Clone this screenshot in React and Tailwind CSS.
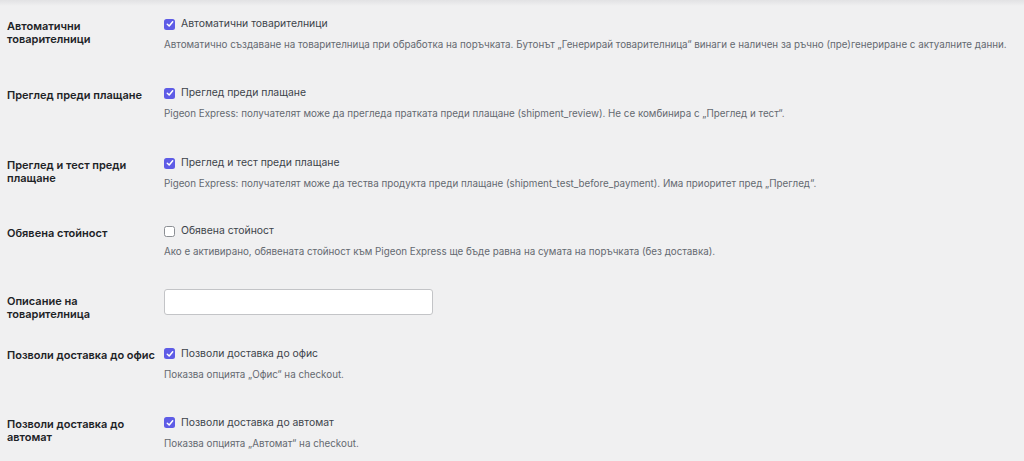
import React from "react";

function Check({ checked }) {
  return checked ? (
    <span className="flex h-[11px] w-[11px] shrink-0 items-center justify-center rounded-[2.5px] bg-[#5e5ce6]">
      <svg width="8" height="8" viewBox="0 0 8 8" fill="none">
        <path d="M1.3 4.2 L3.2 6 L6.7 1.8" stroke="white" strokeWidth="1.5" strokeLinecap="round" strokeLinejoin="round" />
      </svg>
    </span>
  ) : (
    <span className="h-[11px] w-[11px] shrink-0 rounded-[2.5px] border border-[#8c8f94] bg-white" />
  );
}

function Row({ h, label, checked, text, desc, input }) {
  return (
    <div className={`flex ${h}`}>
      <div className="w-[164px] shrink-0 pl-[7px]">
        <div className={`w-[156px] text-[11px] font-semibold leading-[13px] text-[#1d2327] ${input ? "pt-[6px]" : "pt-[3px]"}`}>
          {label}
        </div>
      </div>
      <div className="flex-1">
        {input ? (
          <div className="h-[26px] w-[269px] rounded-[3px] border border-[#c3c4c7] bg-white" />
        ) : (
          <>
            <div className="flex h-[15px] items-center gap-[6px] text-[10.4px] text-[#3c434a]">
              <Check checked={checked} />
              <span>{text}</span>
            </div>
            <div className="mt-[6.5px] text-[9.8px] leading-[14px] text-[#646970]">{desc}</div>
          </>
        )}
      </div>
    </div>
  );
}

export default function App() {
  return (
    <div lang="bg" className="h-[461px] w-[1024px] overflow-hidden bg-[#f0f0f1] font-['Inter',sans-serif]">
      <div className="h-[6px] bg-gradient-to-b from-[#e2e2e4] to-[#f0f0f1]" />
      <div className="flex flex-col pt-[10.5px]">
        <Row
          h="h-[69px]"
          label="Автоматични товарителници"
          checked
          text="Автоматични товарителници"
          desc="Автоматично създаване на товарителница при обработка на поръчката. Бутонът „Генерирай товарителница“ винаги е наличен за ръчно (пре)генериране с актуалните данни."
        />
        <Row
          h="h-[70px]"
          label="Преглед преди плащане"
          checked
          text="Преглед преди плащане"
          desc="Pigeon Express: получателят може да прегледа пратката преди плащане (shipment_review). Не се комбинира с „Преглед и тест“."
        />
        <Row
          h="h-[68px]"
          label="Преглед и тест преди плащане"
          checked
          text="Преглед и тест преди плащане"
          desc="Pigeon Express: получателят може да тества продукта преди плащане (shipment_test_before_payment). Има приоритет пред „Преглед“."
        />
        <Row
          h="h-[65.5px]"
          label="Обявена стойност"
          checked={false}
          text="Обявена стойност"
          desc="Ако е активирано, обявената стойност към Pigeon Express ще бъде равна на сумата на поръчката (без доставка)."
        />
        <Row h="h-[57px]" label="Описание на товарителница" input />
        <Row
          h="h-[69px]"
          label="Позволи доставка до офис"
          checked
          text="Позволи доставка до офис"
          desc="Показва опцията „Офис“ на checkout."
        />
        <Row
          h="h-[46px]"
          label="Позволи доставка до автомат"
          checked
          text="Позволи доставка до автомат"
          desc="Показва опцията „Автомат“ на checkout."
        />
      </div>
    </div>
  );
}
